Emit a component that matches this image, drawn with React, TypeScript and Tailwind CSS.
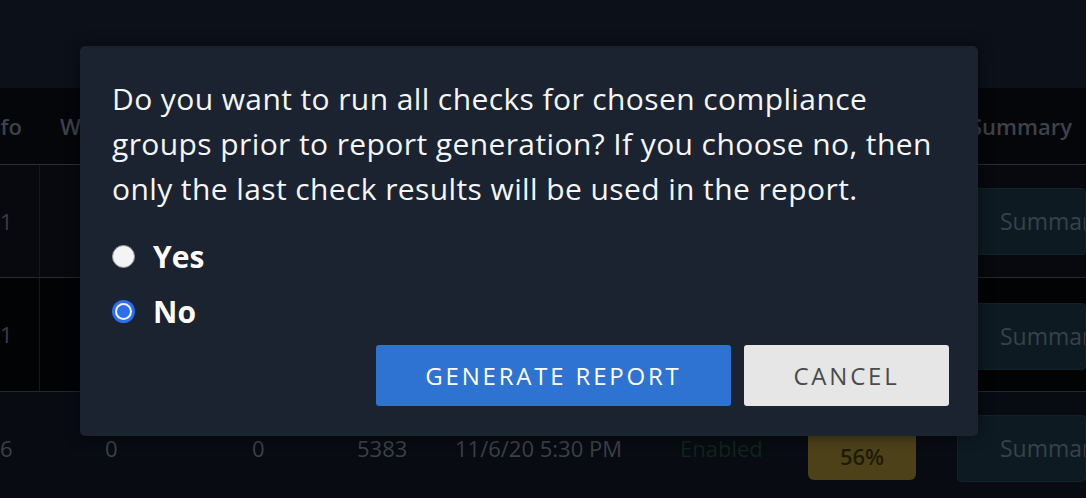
import React from "react";

const rows = [
  { first: "1", h: "h-[113px]", bg: "bg-[#07090e]", pt: "pt-[23px]" },
  { first: "1", h: "h-[114px]", bg: "bg-[#020305]", pt: "pt-[25px]" },
];

function SummaryButton() {
  return (
    <div className="ml-auto w-[129px] h-[67px] rounded-[4px] bg-[#0d1a22] border border-[#13212a] flex items-center pl-[42px] text-[23px] text-[#36424b] overflow-hidden whitespace-nowrap">
      Summary
    </div>
  );
}

function Radio({ checked }: { checked: boolean }) {
  if (checked) {
    return (
      <span className="w-[23px] h-[23px] rounded-full bg-[#2d6df0] p-[3px] flex">
        <span className="flex-1 rounded-full bg-[#eef2fb] p-[2px] flex">
          <span className="flex-1 rounded-full bg-[#2d6df0]" />
        </span>
      </span>
    );
  }
  return <span className="w-[23px] h-[23px] rounded-full bg-[#f4f4f4] border border-[#8f949b]" />;
}

export default function App() {
  return (
    <div className="relative w-full h-[498px] overflow-hidden bg-[#0b0e15] font-['Open_Sans',sans-serif]">
      {/* dimmed page behind the dialog */}
      <div className="flex flex-col h-full">
        <div className="h-[88px] bg-[#0c1019]" />
        <div className="h-[77px] bg-[#04060a] border-b border-[#2b2f36] flex items-center text-[22px] font-semibold text-[#3d424a]">
          <div className="w-[40px] flex justify-end pr-[18px]">fo</div>
          <div className="w-[200px] pl-[20px]">Warn</div>
          <div className="ml-auto pr-[14px]">Summary</div>
        </div>
        {rows.map((r, i) => (
          <div key={i} className={`${r.h} ${r.bg} border-b border-[#24282e] flex`}>
            <div className="w-[40px] border-r border-[#14171c] flex items-center text-[22px] text-[#3a3e45]">{r.first}</div>
            <div className={`flex-1 flex ${r.pt}`}>
              <SummaryButton />
            </div>
          </div>
        ))}
        <div className="flex-1 bg-[#080b11] flex text-[22px] text-[#3c4047]">
          <div className="w-[105px] pt-[40px]">6</div>
          <div className="w-[147px] pt-[40px]">0</div>
          <div className="w-[105px] pt-[40px]">0</div>
          <div className="w-[98px] pt-[40px]">5383</div>
          <div className="w-[225px] pt-[40px] whitespace-nowrap">11/6/20 5:30 PM</div>
          <div className="w-[128px] pt-[40px] text-[#0f2519]">Enabled</div>
          <div className="w-[149px] pt-[30px]">
            <div className="w-[108px] h-[58px] rounded-[6px] bg-[#4d4119] flex items-center justify-center pt-[10px] font-semibold text-[#1f1a08]">
              56%
            </div>
          </div>
          <div className="flex-1 pt-[23px]">
            <SummaryButton />
          </div>
        </div>
      </div>

      {/* dialog */}
      <div className="absolute left-[80px] top-[46px] w-[898px] rounded-[5px] bg-[#1b2230] shadow-[0_0_14px_rgba(0,0,0,0.55)] pt-[30px] pb-[30px] pl-[32px] pr-[29px]">
        <p className="text-[30px] leading-[45px] tracking-[0.4px] text-[#f4f6f8] w-[830px]">
          Do you want to run all checks for chosen compliance groups prior to report generation? If you choose no, then only the last check results will be used in the report.
        </p>
        <div className="mt-[23px] flex flex-col gap-[10px]">
          <label className="flex items-center gap-[18px] h-[45px] text-[30px] font-bold text-white">
            <Radio checked={false} />
            Yes
          </label>
          <label className="flex items-center gap-[18px] h-[45px] text-[30px] font-bold text-white">
            <Radio checked={true} />
            No
          </label>
        </div>
        <div className="mt-[11px] flex justify-end gap-[13px]">
          <button className="w-[355px] h-[61px] rounded-[3px] bg-[#2e72d2] text-white text-[24px] tracking-[2.8px]">
            GENERATE REPORT
          </button>
          <button className="w-[205px] h-[61px] rounded-[3px] bg-[#e6e6e6] text-[#4a4a4a] text-[24px] tracking-[2.8px]">
            CANCEL
          </button>
        </div>
      </div>
    </div>
  );
}
